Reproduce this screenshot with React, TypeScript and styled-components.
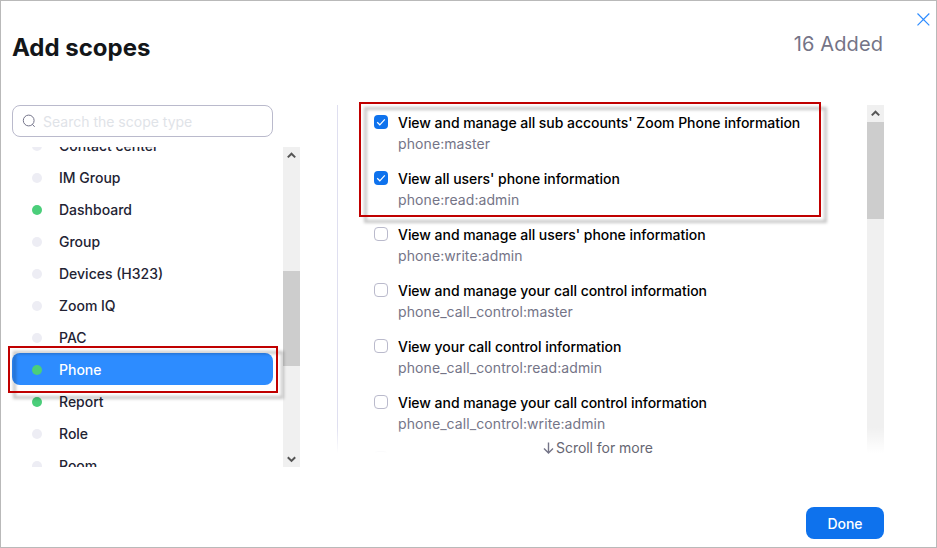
import React from "react";
import styled, { createGlobalStyle, css } from "styled-components";

const GlobalStyle = createGlobalStyle`
  * { box-sizing: border-box; }
  body { margin: 0; background: #fff; font-family: Inter, "Liberation Sans", sans-serif; }
`;

const Dialog = styled.main`
  position: relative;
  width: 937px;
  height: 548px;
  border: 1px solid #b9b9b9;
  background: #fff;
  padding: 0 52px 0 11px;
  overflow: hidden;
  display: flex;
  flex-direction: column;
`;

const CloseButton = styled.button`
  position: absolute;
  top: 11px;
  right: 5px;
  width: 15px;
  height: 15px;
  padding: 0;
  border: 0;
  background: none;
  svg { display: block; }
`;

const Header = styled.header`
  height: 104px;
  flex: none;
  display: flex;
  justify-content: space-between;
`;

const Title = styled.h1`
  margin: 31px 0 0;
  font-size: 24px;
  line-height: 32px;
  font-weight: 700;
  color: #131619;
`;

const AddedCount = styled.span`
  margin: 29px 1px 0 0;
  font-size: 20px;
  line-height: 28px;
  letter-spacing: 0.1px;
  color: #747487;
`;

const Content = styled.div`
  display: flex;
  height: 362px;
  flex: none;
`;

const Sidebar = styled.section`
  width: 288px;
  margin-right: 37px;
  flex: none;
`;

const SearchBox = styled.label`
  width: 261px;
  height: 32px;
  border: 1px solid #babacc;
  border-radius: 8px;
  display: flex;
  align-items: center;
  padding: 0 9px;
  gap: 7px;
`;

const SearchInput = styled.input`
  border: 0;
  outline: 0;
  padding: 2px 0 0;
  min-width: 0;
  flex: 1;
  background: none;
  font: 400 14px/20px Inter, "Liberation Sans", sans-serif;
  &::placeholder { color: #dfe3e8; opacity: 1; }
`;

const TypeScroller = styled.div`
  margin-top: 10px;
  height: 320px;
  display: flex;
  justify-content: space-between;
`;

const TypeViewport = styled.div`
  width: 261px;
  height: 100%;
  overflow: hidden;
`;

const TypeList = styled.ul`
  margin: -18px 0 0;
  padding: 0;
  list-style: none;
`;

const TypeItem = styled.li<{ $selected?: boolean }>`
  height: 32px;
  padding: 2px 20px 0;
  display: flex;
  align-items: center;
  gap: 17px;
  border-radius: 8px;
  font-size: 14px;
  line-height: 20px;
  font-weight: 500;
  color: ${(p) => (p.$selected ? "#fff" : "#232333")};
  background: ${(p) => (p.$selected ? "#2d8cff" : "transparent")};
`;

const StatusDot = styled.span<{ $active?: boolean }>`
  width: 10px;
  height: 10px;
  border-radius: 50%;
  background: ${(p) => (p.$active ? "#4bce7a" : "#ededf4")};
`;

const ScrollTrack = styled.div`
  width: 17px;
  height: 100%;
  flex: none;
  background: #f0f0f0;
  display: flex;
  flex-direction: column;
`;

const ScrollArrow = styled.div<{ $down?: boolean }>`
  width: 17px;
  height: 17px;
  flex: none;
  display: flex;
  align-items: center;
  justify-content: center;
  padding-top: ${(p) => (p.$down ? 2 : 0)}px;
`;

const ScrollRun = styled.div<{ $before: number }>`
  flex: 1;
  padding-top: ${(p) => p.$before}px;
`;

const ScrollThumb = styled.div<{ $size: number }>`
  height: ${(p) => p.$size}px;
  background: #cdcdcd;
`;

const ScopePanel = styled.section`
  position: relative;
  width: 547px;
  height: 362px;
  overflow: hidden;
  display: flex;
  justify-content: space-between;
  background: linear-gradient(#dfdff0, #dfdff0) left top / 1px 100% no-repeat;
`;

const ScopeList = styled.ul`
  margin: 0;
  padding: 7px 0 0 37px;
  list-style: none;
`;

const ScopeItem = styled.li`
  height: 56px;
  display: flex;
  gap: 10px;
`;

const Checkbox = styled.span<{ $checked?: boolean }>`
  width: 14px;
  height: 14px;
  margin-top: 3px;
  flex: none;
  border-radius: 4px;
  display: flex;
  align-items: center;
  justify-content: center;
  ${(p) =>
    p.$checked
      ? css`background: #0e72ed;`
      : css`border: 1px solid #babacc;`}
`;

const ScopeName = styled.div`
  font-size: 14px;
  line-height: 22px;
  font-weight: 500;
  letter-spacing: -0.04px;
  color: #000;
  white-space: nowrap;
`;

const ScopeKey = styled.div`
  font-size: 14px;
  line-height: 20px;
  letter-spacing: 0.09px;
  color: #747487;
`;

const Fade = styled.div`
  position: absolute;
  left: 0;
  right: 0;
  bottom: 0;
  height: 40px;
  background: linear-gradient(rgba(255, 255, 255, 0), #fff 26px);
`;

const MoreHint = styled.div`
  position: absolute;
  left: 542px;
  top: 437px;
  display: flex;
  align-items: center;
  gap: 2px;
  font-size: 14px;
  line-height: 20px;
  letter-spacing: -0.04px;
  color: #666672;
`;

const Footer = styled.footer`
  display: flex;
  justify-content: flex-end;
  padding-top: 40px;
`;

const DoneButton = styled.button`
  width: 78px;
  height: 32px;
  border: 0;
  border-radius: 8px;
  padding: 2px 0 0;
  background: #0e72ed;
  color: #fff;
  font: 500 14px/20px Inter, "Liberation Sans", sans-serif;
`;

// Annotation frame with an offset drop shadow, laid over the dialog.
const Callout = styled.div<{ $x: number; $y: number; $w: number; $h: number }>`
  position: absolute;
  left: ${(p) => p.$x}px;
  top: ${(p) => p.$y}px;
  width: ${(p) => p.$w}px;
  height: ${(p) => p.$h}px;
  pointer-events: none;
  &::before {
    content: "";
    position: absolute;
    inset: 5px -6px -6px 5px;
    border: 3px solid rgba(0, 0, 0, 0.22);
    filter: blur(1.4px);
  }
  &::after {
    content: "";
    position: absolute;
    inset: 0;
    border: 2px solid #c00000;
  }
`;

const SearchIcon = () => (
  <svg width="14" height="14" viewBox="0 0 14 14" fill="none" stroke="#74748a" strokeWidth="1">
    <circle cx="6.7" cy="6.5" r="5.4" />
    <path d="M10.6 10.6 12.4 12.5" strokeLinecap="round" />
  </svg>
);

const CheckIcon = () => (
  <svg width="14" height="14" viewBox="0 0 14 14" fill="none" stroke="#fff" strokeWidth="1.2">
    <path d="M3.2 7.3 5.8 9.8 10.8 4.4" />
  </svg>
);

const Chevron = ({ down }: { down?: boolean }) => (
  <svg width="9" height="7" viewBox="0 0 9 7" fill="none" stroke="#555" strokeWidth="2">
    <path d={down ? "M.8 1.2 4.5 4.9 8.2 1.2" : "M.8 5.4 4.5 1.7 8.2 5.4"} />
  </svg>
);

const Scrollbar = ({ before, size }: { before: number; size: number }) => (
  <ScrollTrack>
    <ScrollArrow><Chevron /></ScrollArrow>
    <ScrollRun $before={before}><ScrollThumb $size={size} /></ScrollRun>
    <ScrollArrow $down><Chevron down /></ScrollArrow>
  </ScrollTrack>
);

const types = [
  { name: "Contact center" },
  { name: "IM Group" },
  { name: "Dashboard", active: true },
  { name: "Group" },
  { name: "Devices (H323)" },
  { name: "Zoom IQ" },
  { name: "PAC" },
  { name: "Phone", active: true, selected: true },
  { name: "Report", active: true },
  { name: "Role" },
  { name: "Room" },
];

const scopes = [
  { name: "View and manage all sub accounts' Zoom Phone information", key: "phone:master", checked: true },
  { name: "View all users' phone information", key: "phone:read:admin", checked: true },
  { name: "View and manage all users' phone information", key: "phone:write:admin" },
  { name: "View and manage your call control information", key: "phone_call_control:master" },
  { name: "View your call control information", key: "phone_call_control:read:admin" },
  { name: "View and manage your call control information", key: "phone_call_control:write:admin" },
  { name: "", key: "" },
];

export default function App() {
  return (
    <>
      <GlobalStyle />
      <Dialog>
        <Header>
          <Title>Add scopes</Title>
          <AddedCount>16 Added</AddedCount>
        </Header>
        <Content>
          <Sidebar>
            <SearchBox>
              <SearchIcon />
              <SearchInput placeholder="Search the scope type" />
            </SearchBox>
            <TypeScroller>
              <TypeViewport>
                <TypeList>
                  {types.map((t) => (
                    <TypeItem key={t.name} $selected={t.selected}>
                      <StatusDot $active={t.active} />
                      {t.name}
                    </TypeItem>
                  ))}
                </TypeList>
              </TypeViewport>
              <Scrollbar before={107} size={95} />
            </TypeScroller>
          </Sidebar>
          <ScopePanel>
            <ScopeList>
              {scopes.map((s) => (
                <ScopeItem key={s.key}>
                  <Checkbox $checked={s.checked}>{s.checked && <CheckIcon />}</Checkbox>
                  <div>
                    <ScopeName>{s.name}</ScopeName>
                    <ScopeKey>{s.key}</ScopeKey>
                  </div>
                </ScopeItem>
              ))}
            </ScopeList>
            <Scrollbar before={0} size={97} />
            <Fade />
          </ScopePanel>
        </Content>
        <Footer>
          <DoneButton>Done</DoneButton>
        </Footer>
        <MoreHint>
          <svg width="11" height="12" viewBox="0 0 11 12" fill="none" stroke="#747487" strokeWidth="1.4">
            <path d="M5.5 .5V10.8M1 6.5 5.5 11 10 6.5" />
          </svg>
          Scroll for more
        </MoreHint>
        <CloseButton aria-label="Close">
          <svg width="15" height="15" viewBox="0 0 15 15" fill="none" stroke="#2d8cff" strokeWidth="1.2">
            <path d="M1.5 1.5 13.3 13.3M13.3 1.5 1.5 13.3" />
          </svg>
        </CloseButton>
        <Callout $x={7} $y={345} $w={270} $h={47} />
        <Callout $x={358} $y={101} $w={462} $h={115} />
      </Dialog>
    </>
  );
}
